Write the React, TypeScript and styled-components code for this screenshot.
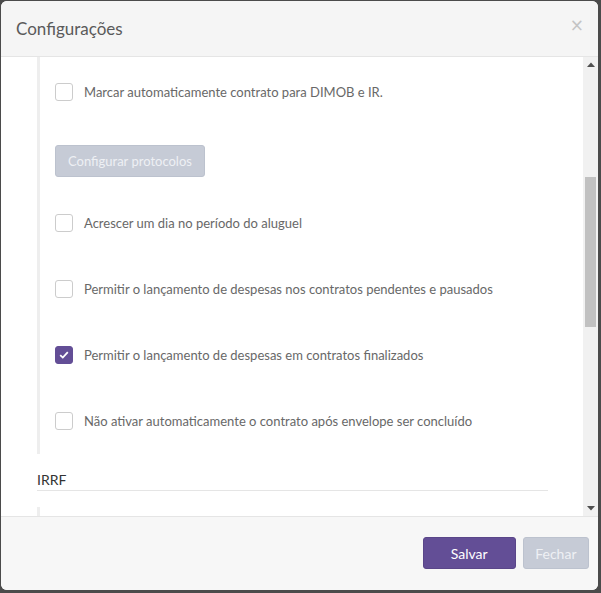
import { useLayoutEffect, useRef, useState } from 'react';
import styled, { createGlobalStyle } from 'styled-components';

const GlobalStyle = createGlobalStyle`
    html, body {
        margin: 0;
        padding: 0;
        background: #4b4b4b;
        font-family: Lato, 'Liberation Sans', sans-serif;
    }
    * {
        box-sizing: border-box;
    }
`;

const Page = styled.div`
    padding: 1px;
    width: 601px;
    height: 593px;
`;

const Modal = styled.div`
    width: 597px;
    height: 589px;
    background: #ffffff;
    border-radius: 6px;
    overflow: hidden;
    display: flex;
    flex-direction: column;
`;

const Header = styled.div`
    height: 56px;
    flex-shrink: 0;
    background: #f5f5f5;
    border-bottom: 1px solid #e5e5e5;
    display: flex;
    align-items: center;
    justify-content: space-between;
    padding: 0 14px 0 15px;
`;

const Title = styled.h4`
    margin: 0;
    font-size: 17px;
    font-weight: 400;
    color: #5a5a5a;
`;

const Close = styled.button`
    border: none;
    background: transparent;
    padding: 0;
    font-family: 'DejaVu Sans', sans-serif;
    font-size: 17px;
    line-height: 1;
    color: #c4c4c4;
    margin-top: -6px;
    cursor: pointer;
`;

const BodyWrap = styled.div`
    flex: 1;
    min-height: 0;
    display: flex;
`;

const Viewport = styled.div`
    flex: 1;
    overflow: hidden;
    padding: 7px 35px 15px 36px;
`;

const Track = styled.div`
    width: 15px;
    flex-shrink: 0;
    background: #f1f1f1;
    display: flex;
    flex-direction: column;
`;

const Arrow = styled.div`
    height: 15px;
    display: flex;
    align-items: center;
    justify-content: center;
`;

const Rail = styled.div`
    flex: 1;
    position: relative;
`;

const Thumb = styled.div`
    position: absolute;
    left: 2px;
    right: 2px;
    background: #c1c1c1;
`;

const Section = styled.div`
    padding-top: 16px;
`;

const SectionTitle = styled.div`
    font-size: 14px;
    line-height: 20px;
    color: #333333;
    border-bottom: 1px solid #e5e5e5;
    margin-bottom: 16px;
`;

const Group = styled.div`
    border-left: 3px solid #eeeeee;
    padding-left: 15px;
`;

const Row = styled.label`
    height: 66px;
    display: flex;
    align-items: center;
    gap: 11px;
    font-size: 13px;
    color: #686868;
    cursor: pointer;
`;

const Box = styled.span<{ $checked?: boolean }>`
    width: 18px;
    height: 18px;
    flex-shrink: 0;
    border-radius: 3px;
    border: 1px solid ${(p) => (p.$checked ? '#634e96' : '#cccccc')};
    background: ${(p) => (p.$checked ? '#634e96' : '#ffffff')};
    display: flex;
    align-items: center;
    justify-content: center;
`;

const ButtonRow = styled.div`
    padding: 20px 0 13px;
`;

const Button = styled.button<{ $primary?: boolean }>`
    height: 32px;
    padding: 0 11.5px;
    border-radius: 3px;
    font-family: Lato, 'Liberation Sans', sans-serif;
    font-size: 14px;
    border: 1px solid ${(p) => (p.$primary ? '#5a4689' : '#bcc2ce')};
    background: ${(p) => (p.$primary ? '#634e96' : '#c6cbd6')};
    color: ${(p) => (p.$primary ? '#ffffff' : '#eef0f4')};
    min-width: ${(p) => (p.$primary ? '93px' : '0')};
`;

const SmallButton = styled(Button)`
    font-size: 13px;
    padding: 0 12px;
`;

const Footer = styled.div`
    height: 74px;
    flex-shrink: 0;
    background: #f7f7f7;
    border-top: 1px solid #e5e5e5;
    display: flex;
    justify-content: flex-end;
    align-items: flex-start;
    gap: 7px;
    padding: 20px 9px 0;
`;

type Option = { label: string; checked?: boolean };

const contratos: Option[] = [
    { label: 'Gerar repasse automaticamente ao receber o aluguel' },
    { label: 'Enviar aviso de reajuste ao locatário' },
    { label: 'Exigir vistoria antes da ativação do contrato' },
    { label: 'Calcular multa proporcional na rescisão' },
    { label: 'Marcar automaticamente contrato para DIMOB e IR.' },
];

const contratosFim: Option[] = [
    { label: 'Acrescer um dia no período do aluguel' },
    { label: 'Permitir o lançamento de despesas nos contratos pendentes e pausados' },
    { label: 'Permitir o lançamento de despesas em contratos finalizados', checked: true },
    { label: 'Não ativar automaticamente o contrato após envelope ser concluído' },
];

const irrf: Option[] = [
    { label: 'Reter IRRF automaticamente nos repasses' },
    { label: 'Considerar dependentes do locador no cálculo' },
    { label: 'Deduzir taxa de administração da base de cálculo' },
    { label: 'Gerar informe de rendimentos anual' },
    { label: 'Exibir IRRF no demonstrativo do locador' },
    { label: 'Arredondar valores de retenção' },
    { label: 'Notificar locador sobre retenção' },
    { label: 'Enviar DARF por e-mail ao locador' },
];

function Check() {
    return (
        <svg width="10" height="8" viewBox="0 0 10 8">
            <path d="M1.2 4.2 L3.8 6.6 L8.8 1.2" fill="none" stroke="#ffffff" strokeWidth="1.8" />
        </svg>
    );
}

function ArrowIcon({ down }: { down?: boolean }) {
    return (
        <svg width="8" height="5" viewBox="0 0 8 5">
            <path d={down ? 'M0 0 L8 0 L4 4.5 Z' : 'M0 5 L8 5 L4 0.5 Z'} fill="#505050" />
        </svg>
    );
}

function OptionRow({ option, rowRef }: { option: Option; rowRef?: React.Ref<HTMLLabelElement> }) {
    return (
        <Row ref={rowRef}>
            <Box $checked={option.checked}>{option.checked && <Check />}</Box>
            {option.label}
        </Row>
    );
}

export default function App() {
    const viewRef = useRef<HTMLDivElement>(null);
    const railRef = useRef<HTMLDivElement>(null);
    const targetRef = useRef<HTMLLabelElement>(null);
    const [thumb, setThumb] = useState({ top: 0, height: 0 });

    useLayoutEffect(() => {
        const view = viewRef.current;
        const rail = railRef.current;
        const target = targetRef.current;
        if (!view || !rail || !target) return;
        // rola até a opção DIMOB, como na tela aberta
        const offset = target.getBoundingClientRect().top - view.getBoundingClientRect().top;
        view.scrollTop += offset - 2;
        const railH = rail.clientHeight;
        setThumb({
            top: (railH * view.scrollTop) / view.scrollHeight,
            height: (railH * view.clientHeight) / view.scrollHeight,
        });
    }, []);

    return (
        <>
            <GlobalStyle />
            <Page>
                <Modal>
                    <Header>
                        <Title>Configurações</Title>
                        <Close>×</Close>
                    </Header>
                    <BodyWrap>
                        <Viewport ref={viewRef}>
                            <Section>
                                <SectionTitle>Contratos</SectionTitle>
                                <Group>
                                    {contratos.map((o, i) => (
                                        <OptionRow
                                            key={o.label}
                                            option={o}
                                            rowRef={i === contratos.length - 1 ? targetRef : undefined}
                                        />
                                    ))}
                                    <ButtonRow>
                                        <SmallButton>Configurar protocolos</SmallButton>
                                    </ButtonRow>
                                    {contratosFim.map((o) => (
                                        <OptionRow key={o.label} option={o} />
                                    ))}
                                </Group>
                            </Section>
                            <Section>
                                <SectionTitle>IRRF</SectionTitle>
                                <Group>
                                    {irrf.map((o) => (
                                        <OptionRow key={o.label} option={o} />
                                    ))}
                                </Group>
                            </Section>
                        </Viewport>
                        <Track>
                            <Arrow>
                                <ArrowIcon />
                            </Arrow>
                            <Rail ref={railRef}>
                                <Thumb style={{ top: thumb.top, height: thumb.height }} />
                            </Rail>
                            <Arrow>
                                <ArrowIcon down />
                            </Arrow>
                        </Track>
                    </BodyWrap>
                    <Footer>
                        <Button $primary>Salvar</Button>
                        <Button>Fechar</Button>
                    </Footer>
                </Modal>
            </Page>
        </>
    );
}
